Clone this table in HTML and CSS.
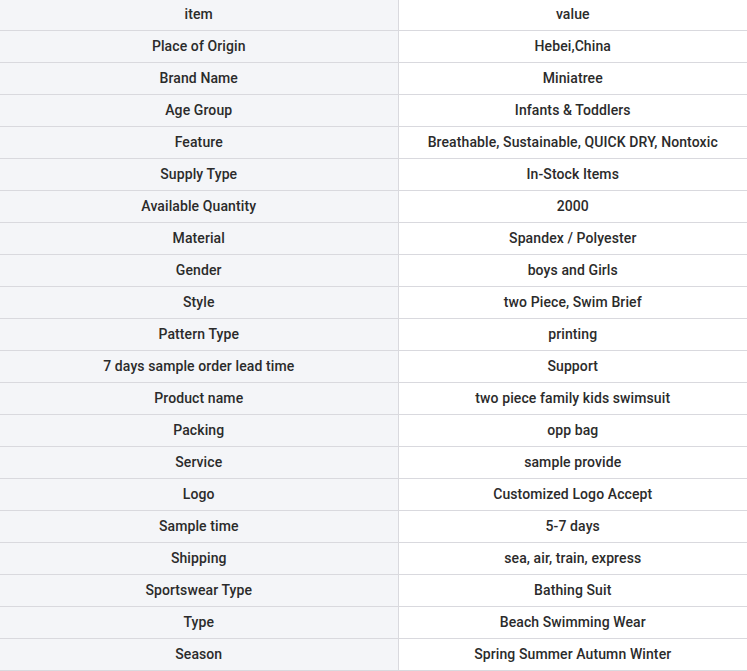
FILE: index.html
```html
<!DOCTYPE html>
<html>
<head>
<meta charset="utf-8">
<link rel="stylesheet" href="styles.css">
</head>
<body>
<table class="spec">
<tbody>
<tr><td class="k">item</td><td class="v">value</td></tr>
<tr><td class="k">Place of Origin</td><td class="v">Hebei,China</td></tr>
<tr><td class="k">Brand Name</td><td class="v">Miniatree</td></tr>
<tr><td class="k">Age Group</td><td class="v">Infants &amp; Toddlers</td></tr>
<tr><td class="k">Feature</td><td class="v">Breathable, Sustainable, QUICK DRY, Nontoxic</td></tr>
<tr><td class="k">Supply Type</td><td class="v">In-Stock Items</td></tr>
<tr><td class="k">Available Quantity</td><td class="v">2000</td></tr>
<tr><td class="k">Material</td><td class="v">Spandex / Polyester</td></tr>
<tr><td class="k">Gender</td><td class="v">boys and Girls</td></tr>
<tr><td class="k">Style</td><td class="v">two Piece, Swim Brief</td></tr>
<tr><td class="k">Pattern Type</td><td class="v">printing</td></tr>
<tr><td class="k">7 days sample order lead time</td><td class="v">Support</td></tr>
<tr><td class="k">Product name</td><td class="v">two piece family kids swimsuit</td></tr>
<tr><td class="k">Packing</td><td class="v">opp bag</td></tr>
<tr><td class="k">Service</td><td class="v">sample provide</td></tr>
<tr><td class="k">Logo</td><td class="v">Customized Logo Accept</td></tr>
<tr><td class="k">Sample time</td><td class="v">5-7 days</td></tr>
<tr><td class="k">Shipping</td><td class="v">sea, air, train, express</td></tr>
<tr><td class="k">Sportswear Type</td><td class="v">Bathing Suit</td></tr>
<tr><td class="k">Type</td><td class="v">Beach Swimming Wear</td></tr>
<tr><td class="k">Season</td><td class="v">Spring Summer Autumn Winter</td></tr>
</tbody>
</table>
</body>
</html>
```

FILE: styles.css
```css
html, body {
  margin: 0;
  padding: 0;
  background: #ffffff;
}
.spec {
  border-collapse: collapse;
  width: 747px;
  margin-top: -2px;
  font-family: Roboto, "Liberation Sans", sans-serif;
  font-size: 14px;
  font-weight: 500;
  letter-spacing: 0.1px;
  color: #2b2b2b;
  table-layout: fixed;
}
.spec td {
  height: 32px;
  padding: 0 8px 2px;
  border-top: 1px solid #d9d9de;
  border-bottom: 1px solid #d9d9de;
  text-align: center;
  vertical-align: middle;
  box-sizing: border-box;
  white-space: nowrap;
}
.spec tr:first-child td {
  border-top: 1px solid transparent;
}
.spec .k {
  width: 398px;
  background: #f4f5f8;
  border-right: 1px solid #d9d9de;
}
.spec .v {
  background: #ffffff;
}
```
